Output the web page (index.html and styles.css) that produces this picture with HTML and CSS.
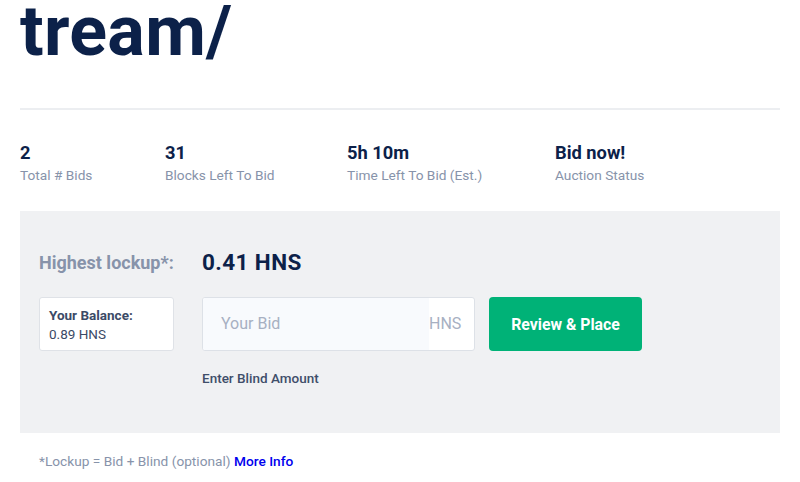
FILE: index.html
```html
<!DOCTYPE html>
<html>
<head>
<meta charset="utf-8">
<link rel="stylesheet" href="styles.css">
</head>
<body>
<div class="page">
  <h1 class="title">tream/</h1>
  <div class="rule"></div>
  <div class="stats">
    <div class="stat s1"><div class="stat-value">2</div><div class="stat-label">Total # Bids</div></div>
    <div class="stat s2"><div class="stat-value">31</div><div class="stat-label">Blocks Left To Bid</div></div>
    <div class="stat s3"><div class="stat-value">5h 10m</div><div class="stat-label">Time Left To Bid (Est.)</div></div>
    <div class="stat s4"><div class="stat-value">Bid now!</div><div class="stat-label">Auction Status</div></div>
  </div>
  <div class="panel">
    <div class="lockup-row">
      <div class="lockup-label">Highest lockup*:</div>
      <div class="lockup-value">0.41 HNS</div>
    </div>
    <div class="bid-row">
      <div class="balance">
        <div class="balance-title">Your Balance:</div>
        <div class="balance-amount">0.89 HNS</div>
      </div>
      <div class="bid-col">
        <div class="bid-input">
          <div class="bid-placeholder">Your Bid</div>
          <div class="bid-unit">HNS</div>
        </div>
        <div class="blind-link">Enter Blind Amount</div>
      </div>
      <div class="btn">Review &amp; Place</div>
    </div>
  </div>
  <div class="footnote">*Lockup = Bid + Blind (optional) <a class="more" href="#">More Info</a></div>
</div>
</body>
</html>
```
FILE: styles.css
```css
* { box-sizing: border-box; }
html, body { margin: 0; padding: 0; background: #fff; }
body { font-family: Roboto, "Liberation Sans", sans-serif; }
.page { padding: 0 20px; }
.title {
  margin: 0;
  font-size: 70px;
  line-height: 62px;
  font-weight: 700;
  color: #0c2149;
  letter-spacing: 0.3px;
}
.rule { height: 2px; background: #eceef1; margin-top: 46px; }
.stats { display: flex; margin-top: 32px; }
.stat { display: flex; flex-direction: column; }
.s1 { width: 145px; }
.s2 { width: 182px; }
.s3 { width: 208px; }
.stat-value { font-size: 18.3px; font-weight: 700; color: #0c2149; line-height: 22px; }
.stat-label { font-size: 13.7px; color: #8793aa; line-height: 20px; margin-top: 1px; }
.panel {
  background: #f0f1f3;
  margin-top: 26px;
  height: 222px;
  padding: 38px 19px 0;
}
.lockup-row { display: flex; align-items: center; height: 26px; }
.lockup-label { width: 163px; font-size: 18px; font-weight: 700; color: #8793aa; }
.lockup-value { font-size: 22.5px; font-weight: 700; color: #0c2149; letter-spacing: 0.4px; }
.bid-row { display: flex; align-items: flex-start; margin-top: 22px; }
.balance {
  width: 135px; height: 54px;
  background: #fff;
  border: 1px solid #dfe2e7;
  border-radius: 3px;
  padding: 8px 9px 0;
  font-size: 13.5px;
  color: #3b4a66;
  line-height: 19px;
}
.balance-title { font-weight: 700; }
.bid-col { margin-left: 28px; }
.bid-input {
  width: 273px; height: 54px;
  border: 1px solid #dde1e7;
  border-radius: 3px;
  background: #fff;
  display: flex;
  overflow: hidden;
}
.bid-placeholder {
  flex: 1;
  background: #f8fafd;
  padding-left: 18px;
  font-size: 16px;
  color: #a7b0c2;
  line-height: 52px;
}
.bid-unit {
  width: 45px;
  font-size: 16px;
  color: #a7b0c2;
  line-height: 52px;
}
.blind-link { font-size: 13.5px; font-weight: 500; color: #3f4e6a; margin-top: 19px; line-height: 16px; }
.btn {
  margin-left: 14px;
  width: 153px; height: 54px;
  background: #00b277;
  border-radius: 4px;
  color: #fff;
  font-size: 15.8px;
  font-weight: 700;
  display: flex; align-items: center; justify-content: center;
}
.footnote { margin-top: 19px; padding-left: 19px; font-size: 13.7px; color: #8793aa; line-height: 18px; }
.more { color: #0000ee; text-decoration: none; font-weight: 500; }
```
